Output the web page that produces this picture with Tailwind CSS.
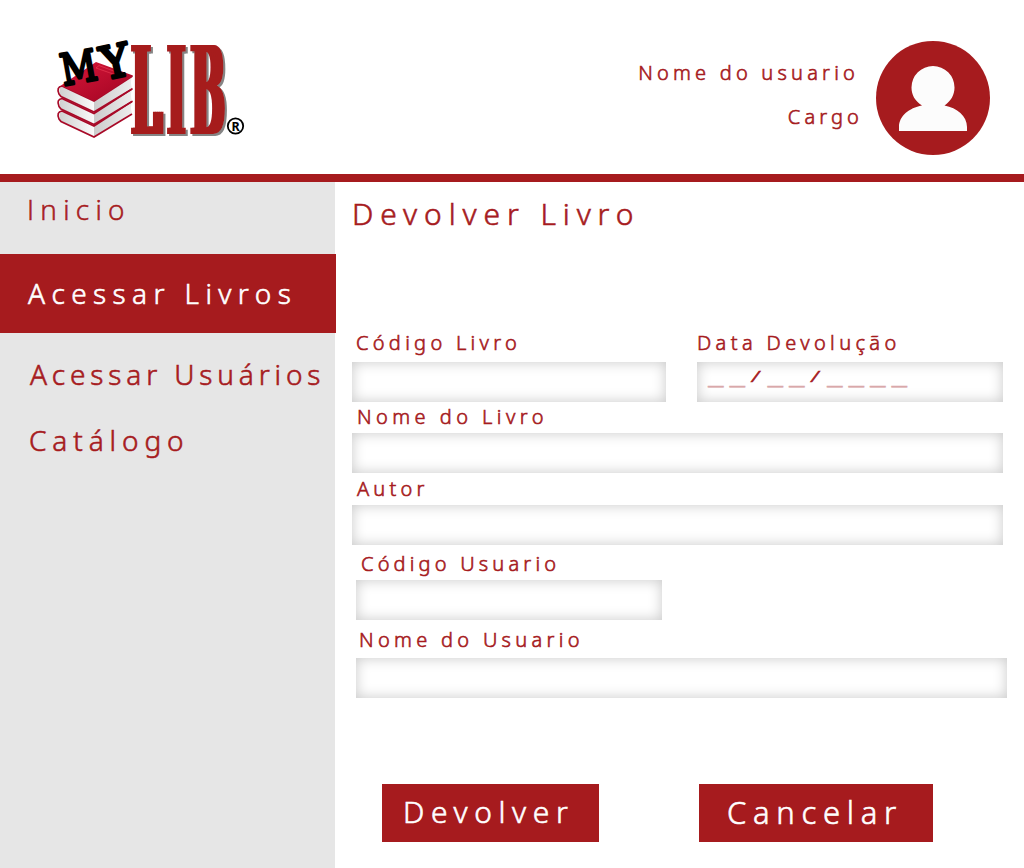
<!DOCTYPE html>
<html lang="pt-BR">
<head>
<meta charset="utf-8">
<title>MyLib - Devolver Livro</title>
<script src="https://cdn.jsdelivr.net/npm/@tailwindcss/browser@4"></script>
</head>
<body class="bg-white">
<div class="flex h-[868px] w-[1024px] flex-col overflow-hidden whitespace-nowrap font-['Noto_Sans',sans-serif] font-light text-[#a61b1e] [-webkit-text-stroke:0.6px]">
  <header class="flex h-[182px] shrink-0 items-start justify-between border-b-8 border-[#a61b1e]">
    <svg class="ml-[50px] mt-[30px] h-[120px] w-[205px] overflow-visible [-webkit-text-stroke:0]" viewBox="50 30 205 120">
      <defs>
        <linearGradient id="cover" x1="0" y1="0" x2="1" y2="1"><stop offset="0" stop-color="#d8173a"/><stop offset="1" stop-color="#a00422"/></linearGradient>
        <linearGradient id="pl" x1="0" y1="0" x2="1" y2="0"><stop offset="0" stop-color="#d0d0d0"/><stop offset="1" stop-color="#fafafa"/></linearGradient>
        <linearGradient id="pr" x1="0" y1="0" x2="1" y2="0"><stop offset="0" stop-color="#cccccc"/><stop offset="1" stop-color="#ededed"/></linearGradient>
        <filter id="slab" filterUnits="userSpaceOnUse" x="120" y="20" width="120" height="140">
          <feOffset in="SourceGraphic" dx="-4" result="a"/><feOffset in="SourceGraphic" dx="-2" result="b"/>
          <feOffset in="SourceGraphic" dx="2" result="c"/><feOffset in="SourceGraphic" dx="4" result="d"/>
          <feMerge result="m"><feMergeNode in="a"/><feMergeNode in="b"/><feMergeNode in="SourceGraphic"/><feMergeNode in="c"/><feMergeNode in="d"/></feMerge>
          <feOffset in="m" dx="2" dy="2" result="s"/>
          <feFlood flood-color="#858585"/><feComposite in2="s" operator="in" result="g"/>
          <feMerge><feMergeNode in="g"/><feMergeNode in="m"/></feMerge>
        </filter>
        <g id="book">
          <path d="M61 86L94 101V112L61 96Q58 91 61 86Z" fill="url(#pl)"/>
          <path d="M94 101L132 77Q130 83 132 88L94 112Z" fill="url(#pr)"/>
          <path d="M132.500 76L94 101L62 86Q56 87 59 94L61 96.500L94 112L132 89" fill="none" stroke="#a80a28" stroke-width="1.700"/>
        </g>
      </defs>
      <use href="#book" y="25"/><use href="#book" y="12.500"/><use href="#book"/>
      <path d="M61 85.500L96 62L133 75.500L94 101Z" fill="url(#cover)"/>
      <path d="M96 68L99 65.500L119 73L116 75Z" fill="none" stroke="#ee4058" stroke-width=".6"/>
      <g font-family="'DejaVu Serif',serif" fill="#000" stroke="#000" stroke-width="3" stroke-linejoin="round">
        <text font-size="43" transform="translate(63.500 85.500) rotate(-10) scale(.820 1)">M</text>
        <text font-size="45" transform="translate(104.500 80) rotate(-12) scale(.970 1)">Y</text>
      </g>
      <g font-family="'DejaVu Serif',serif" fill="#a61b1e" filter="url(#slab)">
        <text font-size="121" transform="translate(132.800 134) scale(.345 1)">L</text>
        <text font-size="121" transform="translate(169 134) scale(.310 1)">I</text>
        <text font-size="121" transform="translate(192 134) scale(.355 1)">B</text>
      </g>
      <circle cx="235.500" cy="126" r="7.700" fill="#fff" stroke="#000" stroke-width="1.800"/>
      <text x="231.600" y="130.500" font-family="'Noto Sans',sans-serif" font-weight="700" font-size="12.500" fill="#000">R</text>
    </svg>
    <div class="flex">
      <div class="mr-[15px] mt-[61px] flex flex-col items-end gap-5 text-xl leading-6">
        <p class="mr-[2px] tracking-[4.2px]">Nome do usuario</p>
        <p class="-mr-[2px] tracking-[4.1px]">Cargo</p>
      </div>
      <svg class="mr-[34px] mt-[41px] size-[114px]" viewBox="0 0 114 114">
        <circle cx="57" cy="57" r="57" fill="#a61b1e"/>
        <path d="M46 64.500C39 60 35.500 54 35.500 46.500A21.500 21.500 0 0 1 78.500 46.500C78.500 54 75 60 68.500 64.500C81 67 91 75 91 86V90H23V86C23 75 33 67 46 64.500Z" fill="#fcfcfc"/>
      </svg>
    </div>
  </header>
  <div class="flex flex-1">
    <nav class="flex w-[335px] shrink-0 flex-col bg-[#e6e6e6] text-[28px] leading-9">
      <a class="ml-[27px] mt-[9px] font-['Open_Sans',sans-serif] tracking-[6.3px]">Inicio</a>
      <a class="mt-[27px] flex h-[79px] w-[336px] items-center bg-[#a61b1e] pb-[2px] pl-7 tracking-[6.4px] text-white">Acessar Livros</a>
      <a class="ml-[30px] mt-[23px] tracking-[4.85px]">Acessar Usuários</a>
      <a class="ml-[29px] mt-[30px] tracking-[5.9px]">Catálogo</a>
    </nav>
    <main class="flex-1 pl-[17px] pt-3 text-xl leading-6">
      <h1 class="text-[30px] leading-10 tracking-[6.9px]">Devolver Livro</h1>
      <div class="mt-[97px] flex">
        <label class="w-[345px]"><span class="ml-1 block tracking-[4.3px]">Código Livro</span>
          <span class="mt-[7px] block h-10 w-[314px] shadow-[inset_0_0_14px_rgba(0,0,0,0.22)]"></span></label>
        <label><span class="block tracking-[4.38px]">Data Devolução</span>
          <span class="mt-[7px] flex h-10 w-[306px] items-baseline pl-[11px] font-['Liberation_Mono',monospace] text-[26px] leading-[30px] text-[#d9a8aa] shadow-[inset_0_0_14px_rgba(0,0,0,0.22)] [-webkit-text-stroke:0.4px]"><span class="tracking-[5.9px]">__</span><i class="relative -top-[2px] w-[16.500px] text-[15px] font-bold text-[#a61b1e] [-webkit-text-stroke:0.6px]">/</i><span class="tracking-[5.9px]">__</span><i class="relative -top-[2px] w-[16.500px] text-[15px] font-bold text-[#a61b1e] [-webkit-text-stroke:0.6px]">/</i><span class="tracking-[5.9px]">____</span></span></label>
      </div>
      <label class="mt-[3px] block"><span class="ml-[5px] block tracking-[4.45px]">Nome do Livro</span>
        <span class="mt-1 block h-10 w-[651px] shadow-[inset_0_0_14px_rgba(0,0,0,0.22)]"></span></label>
      <label class="mt-1 block"><span class="ml-[5px] block tracking-[4.2px]">Autor</span>
        <span class="mt-1 block h-10 w-[651px] shadow-[inset_0_0_14px_rgba(0,0,0,0.22)]"></span></label>
      <label class="ml-1 mt-[7px] block"><span class="ml-[5px] block tracking-[4.18px]">Código Usuario</span>
        <span class="mt-1 block h-10 w-[306px] shadow-[inset_0_0_14px_rgba(0,0,0,0.22)]"></span></label>
      <label class="ml-1 mt-2 block"><span class="ml-[3px] block tracking-[4.3px]">Nome do Usuario</span>
        <span class="mt-[6px] block h-10 w-[651px] shadow-[inset_0_0_14px_rgba(0,0,0,0.22)]"></span></label>
      <div class="ml-[30px] mt-[86px] flex gap-[100px] text-white">
        <button class="h-[58px] w-[217px] bg-[#a61b1e] pb-[3px] pl-[21px] text-left text-[30px] tracking-[6.6px]">Devolver</button>
        <button class="h-[58px] w-[234px] bg-[#a61b1e] pb-[2px] pl-7 text-left text-[31px] tracking-[6.7px]">Cancelar</button>
      </div>
    </main>
  </div>
</div>
</body>
</html>
